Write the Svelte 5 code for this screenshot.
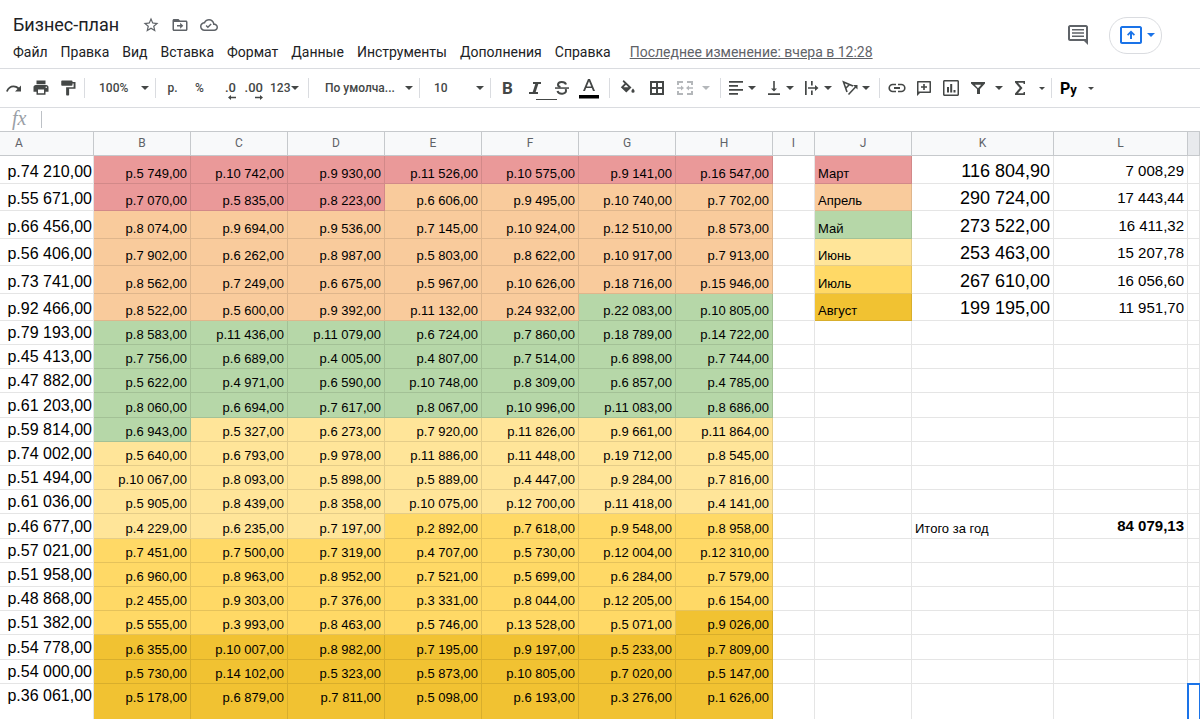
<script lang="ts">
  interface MonthTotal {
    name: string;
    color: string;
    total: number;
    tax: number;
    // number of day cells up to and including the last day of the month
    until: number;
  }

  const menus = ["Файл", "Правка", "Вид", "Вставка", "Формат", "Данные", "Инструменты", "Дополнения", "Справка"];

  const columns = ["A", "B", "C", "D", "E", "F", "G", "H", "I", "J", "K", "L", ""];

  const months: MonthTotal[] = [
    { name: "Март", color: "red", total: 116804.9, tax: 7008.29, until: 10 },
    { name: "Апрель", color: "orange", total: 290724, tax: 17443.44, until: 40 },
    { name: "Май", color: "green", total: 273522, tax: 16411.32, until: 71 },
    { name: "Июнь", color: "cream", total: 253463, tax: 15207.78, until: 101 },
    { name: "Июль", color: "yellow", total: 267610, tax: 16056.6, until: 132 },
    { name: "Август", color: "gold", total: 199195, tax: 11951.7, until: 154 },
  ];

  // week total first, then the seven days
  const weeks = [
    [74210, 5749, 10742, 9930, 11526, 10575, 9141, 16547],
    [55671, 7070, 5835, 8223, 6606, 9495, 10740, 7702],
    [66456, 8074, 9694, 9536, 7145, 10924, 12510, 8573],
    [56406, 7902, 6262, 8987, 5803, 8622, 10917, 7913],
    [73741, 8562, 7249, 6675, 5967, 10626, 18716, 15946],
    [92466, 8522, 5600, 9392, 11132, 24932, 22083, 10805],
    [79193, 8583, 11436, 11079, 6724, 7860, 18789, 14722],
    [45413, 7756, 6689, 4005, 4807, 7514, 6898, 7744],
    [47882, 5622, 4971, 6590, 10748, 8309, 6857, 4785],
    [61203, 8060, 6694, 7617, 8067, 10996, 11083, 8686],
    [59814, 6943, 5327, 6273, 7920, 11826, 9661, 11864],
    [74002, 5640, 6793, 9978, 11886, 11448, 19712, 8545],
    [51494, 10067, 8093, 5898, 5889, 4447, 9284, 7816],
    [61036, 5905, 8439, 8358, 10075, 12700, 11418, 4141],
    [46677, 4229, 6235, 7197, 2892, 7618, 9548, 8958],
    [57021, 7451, 7500, 7319, 4707, 5730, 12004, 12310],
    [51958, 6960, 8963, 8952, 7521, 5699, 6284, 7579],
    [48868, 2455, 9303, 7376, 3331, 8044, 12205, 6154],
    [51382, 5555, 3993, 8463, 5746, 13528, 5071, 9026],
    [54778, 6355, 10007, 8982, 7195, 9197, 5233, 7809],
    [54000, 5730, 14102, 5323, 5873, 10805, 7020, 5147],
    [36061, 5178, 6879, 7811, 5098, 6193, 3276, 1626],
  ];

  const totalRow = 14;

  let zoom = $state("100%");
  let font = $state("По умолча...");
  let size = $state("10");
  let formula = $state("");

  function format(value: number) {
    const [whole, cents] = value.toFixed(2).split(".");
    return whole.replace(/\B(?=(\d{3})+$)/g, "\u00a0") + "," + cents;
  }

  function dayColor(week: number, day: number) {
    const index = week * 7 + day;
    return months.find((month) => index < month.until)?.color ?? "";
  }
</script>

{#snippet caret()}
  <svg class="caret" width="8" height="4" viewBox="0 0 8 4" aria-hidden="true"><path d="M0 0h8L4 4z" /></svg>
{/snippet}

{#snippet smallCaret()}
  <svg class="caret" width="6" height="3" viewBox="0 0 6 3" aria-hidden="true"><path d="M0 0h6L3 3z" /></svg>
{/snippet}

<div class="app">
  <header>
    <div class="doc">
      <div class="title-row">
        <h1>Бизнес-план</h1>
        <button class="plain" aria-label="Пометить">
          <svg width="18" height="18" viewBox="0 0 24 24"><path d="M22 9.24l-7.19-.62L12 2 9.19 8.63 2 9.24l5.46 4.73L5.82 21 12 17.27 18.18 21l-1.63-7.03L22 9.24zM12 15.4l-3.76 2.27 1-4.28-3.32-2.88 4.38-.38L12 6.1l1.71 4.04 4.38.38-3.32 2.88 1 4.28L12 15.4z" /></svg>
        </button>
        <button class="plain" aria-label="Переместить">
          <svg width="18" height="18" viewBox="0 0 24 24"><path d="M20 6h-8l-2-2H4c-1.1 0-2 .9-2 2v12c0 1.100.9 2 2 2h16c1.100 0 2-.9 2-2V8c0-1.100-.9-2-2-2zm0 12H4V8h16v10zM12.200 17l4.200-4-4.200-4v3H8v2h4.200z" /></svg>
        </button>
        <button class="plain" aria-label="Сохранено на Диске">
          <svg width="18" height="18" viewBox="0 0 24 24"><path d="M19.350 10.040C18.670 6.590 15.640 4 12 4 9.110 4 6.610 5.640 5.350 8.040 2.340 8.360 0 10.910 0 14c0 3.310 2.690 6 6 6h13c2.760 0 5-2.240 5-5 0-2.640-2.050-4.780-4.650-4.960zM19 18H6c-2.210 0-4-1.790-4-4s1.790-4 4-4h.7C7.400 7.700 9.500 6 12 6c3.040 0 5.500 2.460 5.500 5.500v.5H19c1.660 0 3 1.340 3 3s-1.340 3-3 3zm-8.500-4.300l-1.700-1.700-1.300 1.300 3 3 5-5-1.300-1.300z" /></svg>
        </button>
      </div>
      <nav>
        {#each menus as menu}
          <button class="menu">{menu}</button>
        {/each}
        <a class="last-edit" href="#history">Последнее изменение: вчера в 12:28</a>
      </nav>
    </div>
    <div class="actions">
      <button class="plain" aria-label="Комментарии">
        <svg width="22" height="22" viewBox="0 0 22 22"><path fill-rule="evenodd" d="M3 1h16c1 0 2 1 2 2v18l-4-4H3c-1 0-2-1-2-2V3c0-1 1-2 2-2zm0 2v12h16V3zM5 5h12v1.600H5zm0 3.200h12v1.600H5zm0 3.200h12V13H5z" /></svg>
      </button>
      <button class="present" aria-label="Показать в видеовстрече">
        <svg width="22" height="18" viewBox="0 0 22 18"><path fill-rule="evenodd" d="M2 0h18c1 0 2 1 2 2v14c0 1-1 2-2 2H2c-1 0-2-1-2-2V2c0-1 1-2 2-2zm0 2v14h18V2zm9 2.500l4 4-1.200 1.200L12 7.900V13h-2V7.900L8.200 9.700 7 8.500z" /></svg>
        {@render caret()}
      </button>
    </div>
  </header>

  <div class="toolbar" role="toolbar" aria-label="Панель инструментов">
    <div class="group">
      <button class="tool" aria-label="Повторить">
        <svg width="18" height="18" viewBox="0 0 18 18"><path d="M1 12.300C2.500 8.500 5.200 6.500 8.500 6.500c2.200 0 4.100.8 5.500 2L16 6.500V12.500h-6L12.500 10C11.400 9 10 8.300 8.500 8.300c-2.600 0-4.800 1.700-5.700 4.500z" /></svg>
      </button>
      <button class="tool" aria-label="Печать">
        <svg width="18" height="18" viewBox="0 0 24 24"><path d="M19 8H5c-1.660 0-3 1.340-3 3v6h4v4h12v-4h4v-6c0-1.660-1.340-3-3-3zm-3 11H8v-5h8v5zm3-7c-.55 0-1-.45-1-1s.45-1 1-1 1 .45 1 1-.45 1-1 1zM18 2H6v5h12V2z" /></svg>
      </button>
      <button class="tool" aria-label="Копировать форматирование">
        <svg width="18" height="18" viewBox="0 0 24 24"><path d="M18 4V3c0-.55-.45-1-1-1H4c-.55 0-1 .45-1 1v5c0 .55.45 1 1 1h13c.55 0 1-.45 1-1V6h1.500v5H9.500v10c0 .55.450 1 1 1h2c.55 0 1-.45 1-1v-8h8.500V4h-4z" /></svg>
      </button>
    </div>

    <label class="picker">
      <select bind:value={zoom} aria-label="Масштаб">
        <option>100%</option>
        <option>75%</option>
        <option>50%</option>
      </select>
      {@render caret()}
    </label>

    <div class="group">
      <button class="tool">р.</button>
      <button class="tool">%</button>
      <button class="tool decimals" aria-label="Меньше знаков после запятой">
        .0
        <svg width="8" height="5" viewBox="0 0 8 5"><path d="M3 0v1.800h5v1.400H3V5L0 2.500z" /></svg>
      </button>
      <button class="tool decimals" aria-label="Больше знаков после запятой">
        .00
        <svg width="8" height="5" viewBox="0 0 8 5"><path d="M5 0v1.800H0v1.400h5V5l3-2.500z" /></svg>
      </button>
      <button class="tool split">123 {@render caret()}</button>
    </div>

    <label class="picker font">
      <select bind:value={font} aria-label="Шрифт">
        <option>По умолча...</option>
        <option>Arial</option>
      </select>
      {@render caret()}
    </label>

    <label class="picker">
      <select bind:value={size} aria-label="Размер шрифта">
        <option>10</option>
        <option>12</option>
        <option>14</option>
      </select>
      {@render caret()}
    </label>

    <div class="group text-style">
      <button class="tool bold" aria-label="Полужирный">B</button>
      <button class="tool" aria-label="Курсив">
        <svg width="18" height="18" viewBox="0 0 18 18"><path d="M7 3h8v2h-2.700l-2.600 8H12v2H3v-2h3.700l2.600-8H7z" /><path d="M10 20h21v1H10z" /></svg>
      </button>
      <button class="tool" aria-label="Зачеркнутый">
        <svg width="18" height="18" viewBox="0 0 18 18"><path class="line" d="M13 5.500C12 2 5 2 5 5.800c0 1.200 1 2 2.500 2.200M4.500 12c1 3.800 9 3.500 8.500-.5 0-.5-.2-1-.5-1.500" /><path d="M2 8.300h14v1.500H2z" /></svg>
      </button>
      <button class="tool" aria-label="Цвет текста">
        <svg width="22" height="22" viewBox="0 0 22 22"><path fill-rule="evenodd" d="M10 2h2l5 12h-2l-1.200-3H8.200L7 14H5zm1 2.200L8.800 9.500h4.400z" /><path class="swatch" d="M1 18h20v3.500H1z" /></svg>
      </button>
    </div>

    <div class="group cells">
      <button class="tool" aria-label="Цвет заливки">
        <svg width="18" height="18" viewBox="0 0 18 18"><path fill-rule="evenodd" d="M4.700 1l7.800 7.500L7.300 13.500 1.800 8.300 5.600 4.500 3.600 2.400zM7 5.800L4.500 8.300h5z" /><path d="M14 9.500s1.600 1.700 1.600 2.700a1.600 1.600 0 0 1-3.200 0c0-1 1.600-2.700 1.600-2.700z" /></svg>
      </button>
      <button class="tool" aria-label="Границы">
        <svg width="18" height="18" viewBox="0 0 18 18"><path fill-rule="evenodd" d="M2 2h14v14H2zm2 2v4h4V4zm6 0v4h4V4zm-6 6v4h4v-4zm6 0v4h4v-4z" /></svg>
      </button>
      <button class="tool wide" aria-label="Объединить ячейки" disabled>
        <svg width="18" height="18" viewBox="0 0 18 18"><path d="M1 2h6v2H3v2H1zm10 0h6v4h-2V4h-4zM1 12h2v2h4v2H1zm14 0h2v4h-6v-2h4zM1 8.200h4V6.500L8 9l-3 2.500V9.800H1zM17 8.200h-4V6.500L10 9l3 2.500V9.800h4z" /></svg>
        {@render caret()}
      </button>
    </div>

    <div class="group">
      <button class="tool split" aria-label="Выравнивание по горизонтали">
        <svg width="18" height="18" viewBox="0 0 18 18"><path d="M2 2h14v1.700H2zm0 4h9v1.700H2zm0 4h14v1.700H2zm0 4h9v1.700H2z" /></svg>
        {@render caret()}
      </button>
      <button class="tool split" aria-label="Выравнивание по вертикали">
        <svg width="18" height="18" viewBox="0 0 18 18"><path d="M8.200 2h1.600v7.500H12L9 12.500l-3-3h2.200zM3 14.300h12V16H3z" /></svg>
        {@render caret()}
      </button>
      <button class="tool split" aria-label="Перенос текста">
        <svg width="18" height="18" viewBox="0 0 18 18"><path d="M2 2h1.700v14H2zm6 0h1.700v4.500H8zm0 9.500h1.700V16H8zM5 8.200h7V6l3.500 3-3.500 3V9.800H5z" /></svg>
        {@render caret()}
      </button>
      <button class="tool split" aria-label="Поворот текста">
        <svg width="18" height="18" viewBox="0 0 18 18"><path class="thin" d="M6 13L2.500 3l9.500 4M4.500 9.500l4-4" /><path class="thin" d="M7.500 15.500l7.500-8" /><path d="M16.500 6v4.500L12 6z" /></svg>
        {@render caret()}
      </button>
    </div>

    <div class="group">
      <button class="tool" aria-label="Вставить ссылку">
        <svg width="18" height="18" viewBox="0 0 18 18"><path d="M2 9c0-1.600 1.200-2.700 2.700-2.700H8V4.700H4.700a4.300 4.300 0 0 0 0 8.600H8v-1.600H4.700C3.200 11.700 2 10.600 2 9zm4 .9h6V8.100H6zm7.300-5.200H10v1.600h3.300a2.700 2.700 0 0 1 0 5.400H10v1.600h3.300a4.300 4.300 0 0 0 0-8.600z" /></svg>
      </button>
      <button class="tool" aria-label="Вставить комментарий">
        <svg width="18" height="18" viewBox="0 0 18 18"><path fill-rule="evenodd" d="M3 2h12c.6 0 1 .4 1 1v10c0 .6-.4 1-1 1H5l-3 3V3c0-.6.4-1 1-1zm.5 1.500v9h11v-9zM8.200 5h1.600v2.200H12v1.600H9.800V11H8.200V8.800H6V7.200h2.200z" /></svg>
      </button>
      <button class="tool" aria-label="Вставить диаграмму">
        <svg width="18" height="18" viewBox="0 0 18 18"><path fill-rule="evenodd" d="M2.500 1h13c.8 0 1.500.7 1.500 1.500v13c0 .8-.7 1.500-1.500 1.500h-13C1.700 17 1 16.300 1 15.500v-13C1 1.700 1.700 1 2.500 1zm0 1.500v13h13v-13zM5 8h2v5.500H5zm3.200-3h2v8.500h-2zm3.300 6h2v2.500h-2z" /></svg>
      </button>
      <button class="tool wide" aria-label="Фильтр">
        <svg width="18" height="18" viewBox="0 0 18 18"><path fill-rule="evenodd" d="M2 3h14v1.500L11 10v5H8v-5L2 4.500zm3.800 2.800L9 9.200l3.200-3.400z" /></svg>
        {@render caret()}
      </button>
      <button class="tool wide" aria-label="Функции">
        <svg width="18" height="18" viewBox="0 0 18 18"><path d="M4 2h10v3h-1.500V3.700H7L11.500 9 7 14.300h5.500V13H14v3H4v-1.500L8.800 9 4 3.500z" /></svg>
        {@render smallCaret()}
      </button>
    </div>

    <div class="group">
      <button class="tool wide script"><span>P<small>у</small></span> {@render smallCaret()}</button>
    </div>
  </div>

  <div class="formula-bar">
    <label for="formula">fx</label>
    <input id="formula" type="text" bind:value={formula} />
  </div>

  <table>
    <colgroup>
      <col class="week" />
      <col class="day" span="7" />
      <col class="gap" />
      <col class="day" />
      <col class="total" />
      <col class="tax" />
      <col />
    </colgroup>
    <thead>
      <tr>
        {#each columns as column}
          <th scope="col">{column}</th>
        {/each}
      </tr>
    </thead>
    <tbody>
      {#each weeks as [sum, ...days], week}
        {@const month = months[week]}
        <tr class:tall={week < months.length}>
          <td class="sum">р.{format(sum)}</td>
          {#each days as value, day}
            <td class="value {dayColor(week, day)}">р.{format(value)}</td>
          {/each}
          <td></td>
          {#if month}
            <td class={month.color}>{month.name}</td>
            <td class="month-total">{format(month.total)}</td>
            <td class="month-tax">{format(month.tax)}</td>
          {:else if week === totalRow}
            <td></td>
            <td>Итого за год</td>
            <td class="month-tax year">84&nbsp;079,13</td>
          {:else}
            <td></td>
            <td></td>
            <td></td>
          {/if}
          <td class:selected={week === weeks.length - 1}></td>
        </tr>
      {/each}
    </tbody>
  </table>
</div>

<style>
  :global(body) {
    overflow: hidden;
    background: #fff;
  }

  .app {
    font-family: Roboto, "Liberation Sans", sans-serif;
    color: #202124;
  }

  button,
  select,
  input {
    margin: 0;
    padding: 0;
    border: 0;
    background: none;
    color: inherit;
    font: inherit;
  }

  svg {
    display: block;
    flex: none;
    overflow: visible;
    fill: currentColor;
  }

  .line,
  .thin {
    fill: none;
    stroke: currentColor;
    stroke-width: 2;
  }

  .thin {
    stroke-width: 1.6;
  }

  header {
    display: flex;
    justify-content: space-between;
    height: 68px;
    border-bottom: 1px solid #dadce0;
  }

  .doc {
    padding: 12px 0 0 13px;
  }

  .title-row {
    display: flex;
    align-items: center;
    gap: 11px;
    height: 26px;
  }

  h1 {
    margin: 0 12px 0 0;
    font-size: 18px;
    font-weight: 400;
    line-height: 26px;
  }

  .plain {
    color: #5f6368;
  }

  nav {
    display: flex;
    align-items: center;
    gap: 13px;
    height: 28px;
    font-size: 14px;
    white-space: nowrap;
  }

  .last-edit {
    margin-left: 6px;
    color: #5f6368;
  }

  .actions {
    display: flex;
    align-items: center;
    gap: 20px;
    padding: 2px 38px 0 0;
  }

  .present {
    display: flex;
    align-items: center;
    justify-content: center;
    gap: 5px;
    width: 53px;
    height: 37px;
    padding-left: 4px;
    border: 1px solid #dadce0;
    border-radius: 18px;
    color: #1a73e8;
  }

  .toolbar {
    display: flex;
    align-items: center;
    height: 38px;
    border-bottom: 1px solid #dadce0;
    color: #444746;
    font-size: 12px;
    font-weight: 500;
  }

  .toolbar > * + *::before {
    content: "";
    flex: none;
    width: 1px;
    height: 20px;
    margin: 0 3px;
    background: #dadce0;
  }

  .group,
  .picker {
    display: flex;
    align-items: center;
  }

  .picker select {
    flex: none;
    width: 46px;
    margin: 0 6px 0 11px;
    appearance: none;
  }

  .picker .caret {
    margin-right: 4px;
    margin-left: -10px;
    pointer-events: none;
  }

  .picker {
    width: 71px;
  }

  .picker.font {
    width: 111px;
  }

  .picker.font select {
    width: 84px;
    margin-left: 13px;
  }

  .tool {
    display: flex;
    align-items: center;
    justify-content: center;
    width: 27px;
    height: 30px;
  }

  .tool.split {
    justify-content: space-between;
    width: 38px;
    padding: 0 6px 0 3px;
  }

  .tool.wide {
    justify-content: space-between;
    width: 42px;
    padding: 0 3px 0 5px;
  }

  .tool:disabled {
    color: #b4b7ba;
  }

  .decimals {
    flex-direction: column;
    align-items: flex-end;
    padding: 5px 4px 0 0;
    font-size: 13px;
    line-height: 14px;
  }

  .bold {
    font-size: 17px;
    font-weight: 700;
  }

  .text-style,
  .cells {
    padding-right: 4px;
  }

  .cells .tool:not(.wide) {
    width: 29px;
  }

  .swatch {
    fill: #000;
  }

  .script span {
    color: #000;
    font-size: 16px;
    font-weight: 700;
  }

  .script small {
    font-size: 13px;
  }

  .formula-bar {
    display: flex;
    align-items: center;
    height: 23px;
    padding-left: 12px;
  }

  .formula-bar label {
    width: 29px;
    color: #9aa0a6;
    font-family: "Liberation Serif", serif;
    font-size: 20px;
    font-style: italic;
    line-height: 18px;
    padding-bottom: 4px;
    box-sizing: border-box;
  }

  .formula-bar input {
    flex: 1;
    height: 17px;
    padding-left: 8px;
    border-left: 1px solid #bdc1c6;
    outline: none;
    font-size: 13px;
  }

  table {
    width: 100%;
    border-top: 1px solid #c6c9cc;
    border-spacing: 0;
    table-layout: fixed;
    color: #000;
    font-family: "Liberation Sans", Arial, sans-serif;
    font-size: 13px;
    line-height: 15px;
  }

  .week {
    width: 94px;
  }

  .day {
    width: 97px;
  }

  .gap {
    width: 42px;
  }

  .total {
    width: 142px;
  }

  .tax {
    width: 134px;
  }

  th {
    box-sizing: border-box;
    height: 24px;
    padding: 0;
    border-right: 1px solid #c6c9cc;
    border-bottom: 1px solid #c6c9cc;
    background: #f8f9fa;
    color: #5f6368;
    font-family: Roboto, sans-serif;
    font-size: 12px;
    font-weight: 400;
  }

  th:first-child {
    padding-left: 15px;
    text-align: left;
  }

  th:last-child {
    background: #e8eaed;
  }

  td {
    box-sizing: border-box;
    height: 24px;
    padding: 0 3px 2px;
    border-right: 1px solid rgb(0 0 0 / 10%);
    border-bottom: 1px solid rgb(0 0 0 / 10%);
    vertical-align: bottom;
    white-space: nowrap;
  }

  tr:nth-child(5n) td {
    height: 25px;
  }

  .tall:nth-child(n) td {
    height: 27px;
  }

  .tall:nth-child(odd) td {
    height: 28px;
  }

  .value,
  .sum,
  .month-total,
  .month-tax {
    text-align: right;
  }

  .sum {
    padding-right: 1px;
    font-size: 16px;
    line-height: 18px;
  }

  .month-total {
    font-size: 18px;
    line-height: 20px;
  }

  .month-tax {
    padding-bottom: 3px;
    font-size: 15px;
    line-height: 18px;
  }

  tr:last-child td {
    height: 40px;
    padding-bottom: 18px;
  }

  .year {
    font-weight: 700;
  }

  .red {
    background: #ea9999;
  }

  .orange {
    background: #f9cb9c;
  }

  .green {
    background: #b6d7a8;
  }

  .cream {
    background: #ffe599;
  }

  .yellow {
    background: #ffd966;
  }

  .gold {
    background: #f1c232;
  }

  .selected {
    outline: 2px solid #1a73e8;
    outline-offset: -1px;
  }
</style>
